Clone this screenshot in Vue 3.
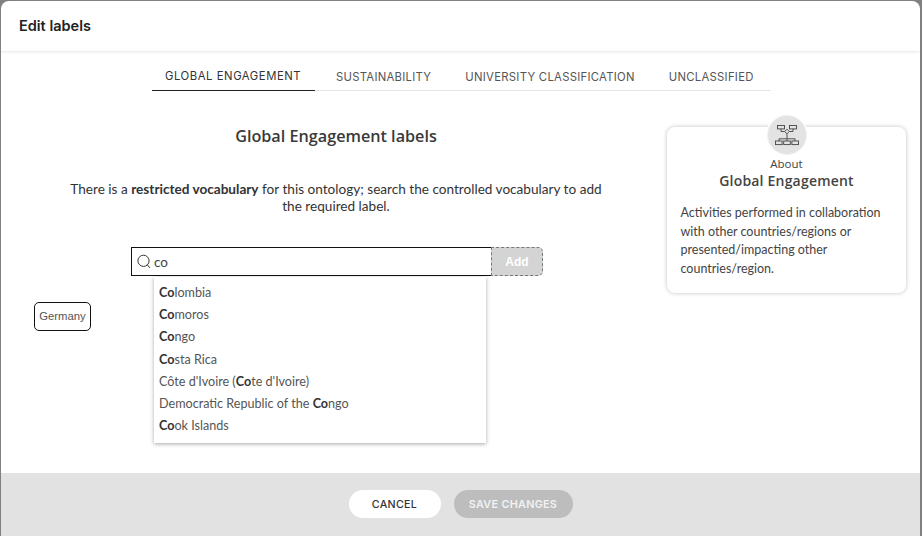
<script setup>
const tabs = ['GLOBAL ENGAGEMENT', 'SUSTAINABILITY', 'UNIVERSITY CLASSIFICATION', 'UNCLASSIFIED']

const results = [
  ['', 'Co', 'lombia'],
  ['', 'Co', 'moros'],
  ['', 'Co', 'ngo'],
  ['', 'Co', 'sta Rica'],
  ["Côte d'Ivoire (", 'Co', "te d'Ivoire)"],
  ['Democratic Republic of the ', 'Co', 'ngo'],
  ['', 'Co', 'ok Islands']
]
</script>

<template>
  <div class="page">
    <div class="modal">
      <header class="modal-head">Edit labels</header>

      <div class="modal-body">
        <nav class="tabs">
          <a v-for="(tab, i) in tabs" :key="tab" class="tab" :class="{ active: i === 0 }">{{ tab }}</a>
        </nav>

        <div class="columns">
          <section class="editor">
            <h2>Global Engagement labels</h2>
            <p class="intro">
              There is a <b>restricted vocabulary</b> for this ontology; search the controlled vocabulary to add the required label.
            </p>

            <div class="search-row">
              <div class="search">
                <svg class="search-icon" width="14" height="15" viewBox="0 0 14 15" fill="none" stroke="#333" stroke-width="1">
                  <circle cx="6.5" cy="6.8" r="5.6" />
                  <path d="M10.5 11l2.2 2.6" stroke-linecap="round" />
                </svg>
                <span>co</span>
              </div>
              <button class="add" disabled>Add</button>

              <ul class="results">
                <li v-for="r in results" :key="r.join('')">{{ r[0] }}<b>{{ r[1] }}</b>{{ r[2] }}</li>
              </ul>
            </div>

            <div class="chips">
              <span class="chip">Germany</span>
            </div>
          </section>

          <aside class="about">
            <div class="about-icon">
              <svg width="24" height="21" viewBox="0 0 24 21" fill="none" stroke="#444" stroke-width="0.9">
                <rect x="2.5" y="0.5" width="7" height="3.4" />
                <rect x="14.5" y="0.5" width="7" height="3.4" />
                <path d="M6 3.9v2.6h3.6M18 3.9v2.6h-3.6" />
                <path d="M12 4.2l2.3 2.3-2.3 2.3-2.3-2.3z" />
                <path d="M12 8.8v5M4 16v-2.2h16v2.2M12 13.8v2.2" />
                <rect x="0.5" y="16" width="6.6" height="3.6" />
                <rect x="8.7" y="16" width="6.6" height="3.6" />
                <rect x="16.9" y="16" width="6.6" height="3.6" />
              </svg>
            </div>
            <div class="about-small">About</div>
            <div class="about-title">Global Engagement</div>
            <p>Activities performed in collaboration with other countries/regions or presented/impacting other countries/region.</p>
          </aside>
        </div>
      </div>

      <footer class="modal-foot">
        <button class="btn cancel">CANCEL</button>
        <button class="btn save" disabled>SAVE CHANGES</button>
      </footer>
    </div>
  </div>
</template>

<style>
html, body {
  margin: 0;
  background: #7a7a7a;
}
</style>

<style scoped>
.page {
  width: 922px;
  height: 536px;
  padding: 1px 2px 0 1px;
  box-sizing: border-box;
  overflow: hidden;
  background: #808080;
  font-family: Lato, "Liberation Sans", sans-serif;
  color: #333;
}
.modal {
  height: 100%;
  display: flex;
  flex-direction: column;
  background: #fff;
  border-radius: 8px 8px 0 0;
  overflow: hidden;
}
.modal-head {
  height: 50px;
  flex: none;
  box-sizing: border-box;
  padding: 15px 18px 0;
  font: 600 14.5px Inter, sans-serif;
  line-height: 20px;
  color: #222;
  box-shadow: 0 1px 3px rgba(0, 0, 0, 0.1);
  position: relative;
}
.modal-body {
  flex: 1;
  min-height: 0;
}
.tabs {
  display: flex;
  width: 619px;
  height: 39px;
  margin: 1px 0 0 151px;
  box-sizing: border-box;
  border-bottom: 1px solid #e4e4e4;
}
.tab {
  flex: none;
  padding: 17px 17px 0;
  font: 400 11.3px Inter, sans-serif;
  line-height: 16px;
  letter-spacing: 0.28px;
  color: #555;
  white-space: nowrap;
  box-sizing: border-box;
}
.tab.active {
  color: #333;
  height: 39px;
  width: 163px;
  margin-right: 4px;
  border-bottom: 1px solid #222;
  padding: 16px 0 0 13px;
  letter-spacing: 0.55px;
}
.columns {
  display: flex;
  align-items: flex-start;
}
.editor {
  width: 604px;
  margin-left: 33px;
  flex: none;
}
h2 {
  margin: 34px 0 0;
  text-align: center;
  font: 600 16.2px "Open Sans", sans-serif;
  line-height: 22px;
  color: #3a3a3a;
}
.intro {
  width: 550px;
  margin: 34px auto 0;
  text-align: center;
  font-size: 13.6px;
  line-height: 17px;
  color: #333;
}
.search-row {
  position: relative;
  display: flex;
  width: 412px;
  height: 30px;
  margin: 32px 0 0 97px;
}
.search {
  width: 361px;
  height: 29px;
  flex: none;
  box-sizing: border-box;
  border: 1px solid #111;
  display: flex;
  align-items: center;
  padding-left: 5px;
  gap: 3px;
  font-size: 13.5px;
  color: #444;
}
.add {
  width: 52px;
  height: 29px;
  margin-left: -1px;
  padding: 0;
  box-sizing: border-box;
  border: 1px dashed #777;
  border-radius: 0 5px 5px 0;
  background: #d4d4d4;
  color: #fff;
  font: 700 12px "Liberation Sans", sans-serif;
}
.results {
  position: absolute;
  left: 23px;
  top: 30px;
  width: 332px;
  height: 166px;
  margin: 0;
  padding: 5px 0 0 5px;
  box-sizing: border-box;
  list-style: none;
  background: #fff;
  box-shadow: 0 1px 4px rgba(0, 0, 0, 0.35);
  font-size: 12.6px;
  color: #555;
}
.results li {
  height: 22.2px;
  line-height: 22px;
}
.results b {
  color: #333;
}
.chips {
  margin-top: 25px;
  display: flex;
}
.chip {
  height: 29px;
  width: 57px;
  box-sizing: border-box;
  border: 1px solid #111;
  border-radius: 5px;
  text-align: center;
  font: 400 11.3px "Liberation Sans", sans-serif;
  line-height: 27px;
  color: #555;
}
.about {
  position: relative;
  width: 239px;
  height: 166px;
  flex: none;
  box-sizing: border-box;
  margin: 36px 0 0 29px;
  padding: 29px 14px 0 14px;
  border-radius: 8px;
  background: #fff;
  box-shadow: 0 0 4px rgba(0, 0, 0, 0.25);
  text-align: center;
}
.about-icon {
  position: absolute;
  left: 100px;
  top: -12px;
  width: 38px;
  height: 38px;
  border-radius: 50%;
  background: #e3e3e3;
  border: 1px solid #f2f2f2;
  box-shadow: 0 0 0 1px #fff;
  display: flex;
  align-items: center;
  justify-content: center;
}
.about-small {
  font: 500 11.5px "Open Sans", sans-serif;
  line-height: 16px;
  color: #444;
}
.about-title {
  font: 600 14px "Open Sans", sans-serif;
  line-height: 18px;
  letter-spacing: 0.2px;
  color: #444;
}
.about p {
  margin: 14px 0 0 -0.5px;
  text-align: left;
  font-size: 12.5px;
  line-height: 18.7px;
  color: #444;
}
.modal-foot {
  height: 63px;
  flex: none;
  background: #e2e2e2;
  display: flex;
  justify-content: center;
  gap: 13px;
  padding-top: 17px;
  box-sizing: border-box;
}
.btn {
  height: 28px;
  border: 0;
  border-radius: 14px;
  padding: 0;
  font: 500 10.7px Inter, sans-serif;
  letter-spacing: 0.3px;
}
.cancel {
  width: 92px;
  background: #fff;
  color: #333;
}
.save {
  width: 119px;
  font-weight: 600;
  font-size: 10.8px;
  background: #bdbdbd;
  color: #f2f2f2;
}
</style>
